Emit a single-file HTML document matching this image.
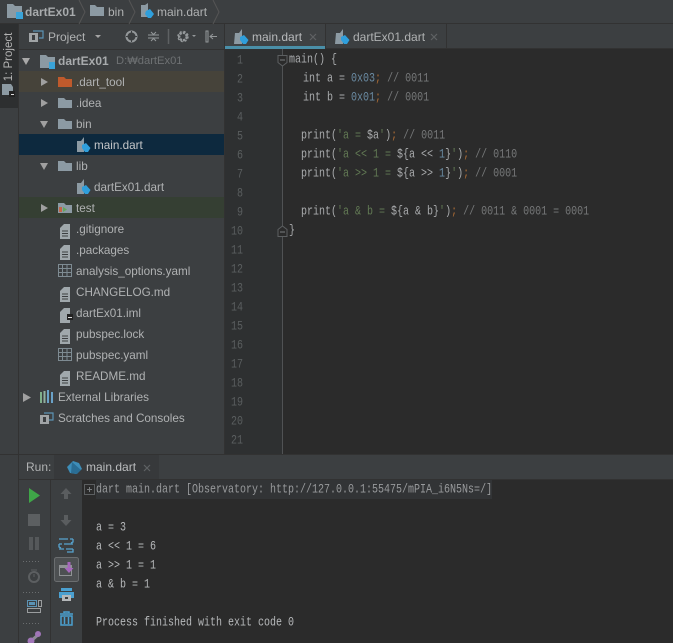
<!DOCTYPE html>
<html><head><meta charset="utf-8">
<style>
html,body{margin:0;padding:0;background:#3c3f41}
#p{position:relative;width:673px;height:643px;overflow:hidden;background:#3c3f41;font-family:"Liberation Sans","Noto Sans CJK KR",sans-serif;color:#bbbbbb;font-size:12px}
.a{position:absolute}
.t{position:absolute;white-space:nowrap;line-height:16px;font-size:12px;color:#b0b2b3}
.r{font-size:11.7px;transform:translateY(1px)}
.m{position:absolute;white-space:pre;font-family:"Liberation Mono",monospace;font-size:10px;line-height:12px;height:12px;transform:scaleY(1.3);transform-origin:0 50%;color:#a9abad}
.n{position:absolute;width:20px;text-align:right;left:223px;font-family:"Liberation Mono",monospace;font-size:10px;line-height:12px;transform:scaleY(1.25);color:#5a5e5f}
svg{position:absolute;left:0;top:0}
.g{color:#627a54}.b{color:#6a8ba3}.o{color:#a86a35}.c{color:#767879}.l{color:#a9b7c6}
</style></head><body><div id="p">
<div class="a" style="left:0;top:23px;width:673px;height:1px;background:#323232"></div>
<div class="a" style="left:0;top:24px;width:18px;height:430px;background:#3c3f41"></div>
<div class="a" style="left:0;top:24px;width:18px;height:84px;background:#2d2f30"></div>
<div class="a" style="left:18px;top:24px;width:1px;height:619px;background:#323232"></div>
<div class="a" style="left:19px;top:49px;width:206px;height:1px;background:#323232"></div>
<div class="a" style="left:19px;top:71px;width:206px;height:21px;background:#46433a"></div>
<div class="a" style="left:19px;top:134px;width:206px;height:21px;background:#0d293e"></div>
<div class="a" style="left:19px;top:197px;width:206px;height:21px;background:#353f33"></div>
<div class="a" style="left:225px;top:24px;width:448px;height:430px;background:#2b2b2b"></div>
<div class="a" style="left:224px;top:24px;width:1px;height:430px;background:#323232"></div>
<div class="a" style="left:225px;top:24px;width:448px;height:25px;background:#3c3f41"></div>
<div class="a" style="left:225px;top:48px;width:448px;height:1px;background:#323232"></div>
<div class="a" style="left:225px;top:24px;width:100px;height:22px;background:#3f4244"></div>
<div class="a" style="left:225px;top:46px;width:100px;height:3px;background:#4a8fa8"></div>
<div class="a" style="left:325px;top:24px;width:1px;height:24px;background:#323232"></div>
<div class="a" style="left:446px;top:24px;width:1px;height:24px;background:#323232"></div>
<div class="a" style="left:225px;top:49px;width:58px;height:405px;background:#2e3031"></div>
<div class="a" style="left:282px;top:49px;width:1px;height:405px;background:#505254"></div>
<div class="a" style="left:0;top:454px;width:673px;height:1px;background:#323232"></div>
<div class="a" style="left:19px;top:455px;width:654px;height:25px;background:#3c3f41"></div>
<div class="a" style="left:54px;top:455px;width:105px;height:25px;background:#37393b"></div>
<div class="a" style="left:19px;top:479px;width:654px;height:1px;background:#323232"></div>
<div class="a" style="left:50px;top:480px;width:1px;height:163px;background:#323232"></div>
<div class="a" style="left:82px;top:480px;width:591px;height:163px;background:#2b2b2b"></div>
<div class="a" style="left:96px;top:480px;width:396px;height:19px;background:#323436"></div>

<svg width="673" height="643" viewBox="0 0 673 643" fill="none">
<!-- breadcrumb -->
<path d="M7 4h6l2 2h7v12H7z" fill="#8c9aa3"/><rect x="16" y="12" width="7" height="7" fill="#3aa3d8"/>
<path d="M79 0l6 12-6 12M129 0l6 12-6 12M213 0l6 12-6 12" stroke="#555" />
<path d="M90 5h5l2 2h7v9H90z" fill="#8c9aa3"/>
<path d="M141 5h4l3-2v14h-7z" fill="#8c9aa3"/><path d="M146 11l4-2 4 5-3 4h-3l-3-4z" fill="#2f9fdc"/>
<!-- project strip icon -->
<path d="M2 84h9l2 3v8H2z" fill="#8c9aa3"/><rect x="9" y="91" width="6" height="6" fill="#222"/><rect x="11" y="94" width="3" height="1" fill="#ddd"/>
<!-- project toolbar -->
<rect x="29" y="33" width="9" height="9" fill="#a0a4a6"/><rect x="32" y="35" width="3" height="5" fill="#3c3f41"/><path d="M33 31h10v7h-4" stroke="#5b93b5" stroke-width="1.2"/>
<path d="M95 35l3 3 3-3z" fill="#a5a5a5"/>
<circle cx="131.500" cy="36.500" r="5" stroke="#94989a" stroke-width="2"/><path d="M131.500 31v3M131.500 39v3M126 36.500h3M134 36.500h3" stroke="#3c3f41"/>
<path d="M151 32l2.500 2.500 2.500-2.500M151 41l2.500-2.500 2.500 2.500M148 35h11M148 38h11" stroke="#94989a"/>
<path d="M168.500 29v15" stroke="#5e6163" stroke-width="1.500"/>
<circle cx="183" cy="36.500" r="3.800" stroke="#94989a" stroke-width="2.500" stroke-dasharray="2.500 1"/><circle cx="183" cy="36.500" r="5" stroke="#94989a" stroke-width="1.500" stroke-dasharray="2 2"/>
<path d="M192 35l2 2 2-2z" fill="#94989a"/>
<path d="M206 31v11h2V31zM210 36.500h7M213 34l-3 2.500 3 2.500" stroke="#94989a"/>
<!-- tree arrows -->
<path d="M22 58l8 0-4 7z" fill="#a9a9a9"/>
<path d="M41 78v8l7-4zM41 99v8l7-4zM41 204v8l7-4zM23 393v9l8-4.500z" fill="#a0a0a0"/>
<path d="M40 121h8l-4 7zM40 163h8l-4 7z" fill="#a0a0a0"/>
<!-- root folder -->
<path d="M40 55h6l2 2h7v11H40z" fill="#8c9aa3"/><rect x="49" y="62" width="6" height="7" fill="#3aa3d8"/>
<!-- folders -->
<path d="M58 77h6l2 2h6v8H58z" fill="#bf5a2c"/>
<path d="M58 98h6l2 2h6v8H58zM58 119h6l2 2h6v8H58zM58 161h6l2 2h6v8H58zM58 203h6l2 2h6v8H58z" fill="#8c9aa3"/>
<path d="M59 207h3v5h-3z" fill="#c2654a"/><path d="M63 207l4 2.500-4 2.500z" fill="#62a85a"/>
<!-- dart files -->
<path d="M77 141h4l3-4v15h-7z" fill="#8c9aa3"/><path d="M82 145l4-2 4.500 5-2.500 4h-3l-3-4z" fill="#2f9fdc"/>
<path d="M77 183h4l3-4v15h-7z" fill="#8c9aa3"/><path d="M82 187l4-2 4.500 5-2.500 4h-3l-3-4z" fill="#2f9fdc"/>
<!-- text files -->
<g fill="#a0a8ac" stroke="none">
<path d="M60 228l4-4h6v15H60z"/><path d="M60 249l4-4h6v15H60z"/><path d="M60 375l4-4h6v15H60z"/><path d="M60 333l4-4h6v15H60z"/><path d="M60 312l4-4h6v15H60z"/>
<path d="M60 291l4-4h6v15H60z"/>
</g>
<path d="M62 231h6M62 233.500h6M62 236h6M62 252h6M62 254.500h6M62 257h6M62 378h6M62 380.500h6M62 383h6M62 336h6M62 338.500h6M62 341h6M62 294h6M62 296.500h6M62 299h6" stroke="#3c3f41"/>
<rect x="67" y="314" width="6" height="6" fill="#222"/><rect x="68" y="317" width="4" height="1" fill="#ddd"/>
<!-- yaml grid -->
<g stroke="#7e8b92"><rect x="58.500" y="264.500" width="13" height="12"/><path d="M58 268.500h14M58 272.500h14M62.500 265v11M67 265v11"/><rect x="58.500" y="348.500" width="13" height="12"/><path d="M58 352.500h14M58 356.500h14M62.500 349v11M67 349v11"/></g>
<!-- ext libs -->
<path d="M41 392v11" stroke="#7fb08b" stroke-width="2"/><path d="M44.500 391v12" stroke="#8fb0a0" stroke-width="2"/><path d="M48 390v13" stroke="#6aa2c8" stroke-width="2"/><path d="M52 392v11" stroke="#6aa2c8" stroke-width="2"/>
<!-- scratches -->
<rect x="40" y="415" width="9" height="9" fill="#a0a4a6"/><rect x="43" y="417" width="3" height="5" fill="#3c3f41"/><path d="M44 413h9v7h-4" stroke="#5b93b5" stroke-width="1.200"/>
<!-- editor tabs icons -->
<path d="M235 33h4l3-4v15h-8z" fill="#8c9aa3"/><path d="M240 37l4-2 4.500 5-2.500 4h-3l-3-4z" fill="#2f9fdc"/>
<path d="M336 33h4l3-4v15h-8z" fill="#8c9aa3"/><path d="M341 37l4-2 4.500 5-2.500 4h-3l-3-4z" fill="#2f9fdc"/>
<path d="M310 34l6 6M316 34l-6 6M431 34l6 6M437 34l-6 6" stroke="#5f6264" stroke-width="1.200"/>
<!-- fold markers -->
<path d="M278 55.500h9v7l-4.500 3.500-4.500-3.500z" fill="#2b2b2b" stroke="#5c5f61"/><path d="M280 60h5" stroke="#7a7d7f"/>
<path d="M278 236.500h9v-7l-4.500-3.500-4.500 3.500z" fill="#2b2b2b" stroke="#5c5f61"/><path d="M280 232h5" stroke="#7a7d7f"/>
<!-- run tab -->
<path d="M67 467l6-6 6 2 3 6-6 5-6-1z" fill="#3d8db8"/><path d="M72 462l9 8-4 4-6-1z" fill="#2a6d94"/>
<path d="M144 465l6 6M150 465l-6 6" stroke="#5f6264" stroke-width="1.200"/>
<!-- run toolbar 1 -->
<path d="M29 488v15l11-7.500z" fill="#3fa648"/>
<rect x="28" y="514" width="12" height="12" fill="#5c5f61"/>
<path d="M29 537h4v13h-4zM35 537h4v13h-4z" fill="#55585a"/>
<path d="M23 561.500h17M23 592.500h17M23 623.500h17" stroke="#6a6d6f" stroke-dasharray="1 2"/>
<circle cx="34" cy="577" r="5" stroke="#5c5f61" stroke-width="2"/><path d="M31 570h6M34 574v3" stroke="#5c5f61"/>
<rect x="27.500" y="600.500" width="9" height="6" stroke="#5b93b5"/><rect x="38.500" y="600.500" width="3" height="6" stroke="#9a9d9f"/><rect x="27.500" y="608.500" width="13" height="4" stroke="#9a9d9f"/><rect x="29" y="602" width="6" height="3" fill="#5b93b5"/>
<path d="M31 641l8-7" stroke="#8e8a96" stroke-width="3"/><circle cx="38" cy="634" r="3" fill="#a075b8"/><circle cx="31" cy="641" r="3.500" fill="#a075b8"/>
<!-- run toolbar 2 -->
<path d="M66 488l-5.500 6h3.500v5h4v-5h3.500z" fill="#5a5d5f"/>
<path d="M66 526l-5.500-6h3.500v-5h4v5h3.500z" fill="#5a5d5f"/>
<g stroke="#57a3cf" stroke-width="1.300"><path d="M59 539h9M70 539h3M59 544h3M64 544h9M59 549h5M66 549h7"/><path d="M73 539v3l-2 1M59 544v3l2 1M73 549v3h-6"/></g>
<rect x="54.500" y="557.500" width="24" height="24" rx="2" fill="#4d5052" stroke="#6b6e70"/>
<rect x="59.500" y="565.500" width="12" height="10" stroke="#8f9294"/><rect x="60" y="566" width="11" height="2" fill="#8f9294"/>
<path d="M67.500 562h3v6h3l-4.500 5-4.500-5h3z" fill="#a668bc"/>
<path d="M61 588h11v3h-11zM59 592h15v6H59z" fill="#4ba0d0"/><rect x="62" y="595" width="9" height="6" fill="#b5b8ba"/><rect x="65" y="597" width="3" height="2" fill="#3c3f41"/>
<path d="M60 614h13M64 613v-1h5v1" stroke="#4ba0d0" stroke-width="1.500"/><path d="M61 616h11v9H61z" stroke="#4ba0d0" stroke-width="1.500"/><path d="M64.500 617v7M68.500 617v7" stroke="#4ba0d0" stroke-width="1.500"/>
<!-- console fold -->
<rect x="84.500" y="484.500" width="10" height="10" stroke="#5c5f61"/><path d="M87 489.500h5M89.500 487v5" stroke="#7a7d7f"/>
</svg>

<div class="t" style="left:25px;top:4px;font-weight:bold;color:#a8abad">dartEx01</div>
<div class="t" style="left:108px;top:4px">bin</div>
<div class="t" style="left:157px;top:4px">main.dart</div>
<div class="t" style="top:49px;width:54px;text-align:center;transform:rotate(-90deg);transform-origin:center;left:-18px;color:#b4b4b4;font-size:11.500px">1: Project</div>
<div class="t" style="left:48px;top:29px">Project</div>
<div class="t" style="left:58px;top:53px;font-weight:bold;color:#a8abad">dartEx01</div>
<div class="t" style="left:116px;top:53px;color:#6e7173;font-size:11.200px">D:₩dartEx01</div>
<div class="t r" style="left:76px;top:74px">.dart_tool</div>
<div class="t r" style="left:76px;top:95px">.idea</div>
<div class="t r" style="left:76px;top:116px">bin</div>
<div class="t r" style="left:94px;top:137px;color:#c4c6c8">main.dart</div>
<div class="t r" style="left:76px;top:158px">lib</div>
<div class="t r" style="left:94px;top:179px">dartEx01.dart</div>
<div class="t r" style="left:76px;top:200px">test</div>
<div class="t r" style="left:76px;top:221px">.gitignore</div>
<div class="t r" style="left:76px;top:242px">.packages</div>
<div class="t r" style="left:76px;top:263px">analysis_options.yaml</div>
<div class="t r" style="left:76px;top:284px">CHANGELOG.md</div>
<div class="t r" style="left:76px;top:305px">dartEx01.iml</div>
<div class="t r" style="left:76px;top:326px">pubspec.lock</div>
<div class="t r" style="left:76px;top:347px">pubspec.yaml</div>
<div class="t r" style="left:76px;top:368px">README.md</div>
<div class="t r" style="left:58px;top:389px">External Libraries</div>
<div class="t r" style="left:58px;top:410px">Scratches and Consoles</div>
<div class="t" style="left:252px;top:29px;color:#b8babc">main.dart</div>
<div class="t" style="left:353px;top:29px">dartEx01.dart</div>
<div class="t" style="left:26px;top:459px">Run:</div>
<div class="t" style="left:86px;top:459px;color:#bbbdbf">main.dart</div>

<div class="n" style="top:56px">1</div><div class="n" style="top:75px">2</div><div class="n" style="top:94px">3</div><div class="n" style="top:113px">4</div><div class="n" style="top:132px">5</div><div class="n" style="top:151px">6</div><div class="n" style="top:170px">7</div><div class="n" style="top:189px">8</div><div class="n" style="top:208px">9</div><div class="n" style="top:227px">10</div><div class="n" style="top:246px">11</div><div class="n" style="top:265px">12</div><div class="n" style="top:284px">13</div><div class="n" style="top:303px">14</div><div class="n" style="top:322px">15</div><div class="n" style="top:341px">16</div><div class="n" style="top:360px">17</div><div class="n" style="top:379px">18</div><div class="n" style="top:398px">19</div><div class="n" style="top:417px">20</div><div class="n" style="top:436px">21</div>

<div class="m" style="left:289px;top:55px">main() {</div>
<div class="m" style="left:303px;top:74px">int a = <span class="b">0x03</span><span class="o">;</span> <span class="c">// 0011</span></div>
<div class="m" style="left:303px;top:93px">int b = <span class="b">0x01</span><span class="o">;</span> <span class="c">// 0001</span></div>
<div class="m" style="left:301px;top:131px">print(<span class="g">'a = </span>$a<span class="g">'</span>)<span class="o">;</span> <span class="c">// 0011</span></div>
<div class="m" style="left:301px;top:150px">print(<span class="g">'a &lt;&lt; 1 = </span>${a &lt;&lt; <span class="b">1</span>}<span class="g">'</span>)<span class="o">;</span> <span class="c">// 0110</span></div>
<div class="m" style="left:301px;top:169px">print(<span class="g">'a &gt;&gt; 1 = </span>${a &gt;&gt; <span class="b">1</span>}<span class="g">'</span>)<span class="o">;</span> <span class="c">// 0001</span></div>
<div class="m" style="left:301px;top:207px">print(<span class="g">'a &amp; b = </span>${a &amp; b}<span class="g">'</span>)<span class="o">;</span> <span class="c">// 0011 &amp; 0001 = 0001</span></div>
<div class="m" style="left:289px;top:226px">}</div>

<div class="m" style="left:96px;top:485px;color:#989a9c">dart main.dart [Observatory: http://127.0.0.1:55475/mPIA_i6N5Ns=/]</div>
<div class="m" style="left:96px;top:523px;color:#b6b8ba">a = 3</div>
<div class="m" style="left:96px;top:542px;color:#b6b8ba">a &lt;&lt; 1 = 6</div>
<div class="m" style="left:96px;top:561px;color:#b6b8ba">a &gt;&gt; 1 = 1</div>
<div class="m" style="left:96px;top:580px;color:#b6b8ba">a &amp; b = 1</div>
<div class="m" style="left:96px;top:618px;color:#b6b8ba">Process finished with exit code 0</div>
</div></body></html>
